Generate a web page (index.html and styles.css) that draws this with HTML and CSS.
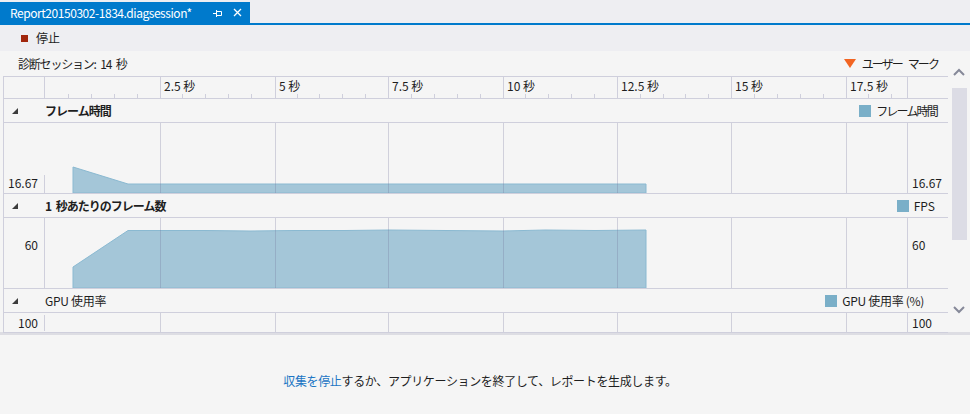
FILE: index.html
```html
<!DOCTYPE html>
<html>
<head>
    <link rel="stylesheet" href="styles.css">
</head>
<body>
    <div class="tabbar">
        <div class="tab">
            <span class="tab-title">Report20150302-1834.diagsession*</span>
            <svg class="pin" width="10" height="9" viewBox="0 0 10 9"><path d="M0 4.5H3M3.5 1V8M3.5 2.5H8.5V6.5H3.5" fill="none" stroke="#fff"/></svg>
            <svg class="close" width="9" height="9" viewBox="0 0 9 9"><path d="M1 1L8 8M8 1L1 8" stroke="#fff" stroke-width="1.3"/></svg>
        </div>
    </div>

    <div class="toolbar">
        <span class="stop-icon"></span>
        <span>停止</span>
    </div>

    <div class="main">
        <div class="view">
            <div class="session">
                <span class="session-info">診断セッション: 14 秒</span>
                <span class="user-mark"><span class="mark-icon"></span>ユーザー マーク</span>
            </div>

            <div class="tracks">
                <div class="row ruler">
                    <div class="cell side"></div>
                    <div class="cell plot">
                        <svg width="862" height="21">
                            <path class="major" d="M115.5 0V21M230.5 0V21M343.5 0V21M458.5 0V21M572.5 0V21M686.5 0V21M801.5 0V21"/>
                            <path class="minor" d="M23.5 17V21M46.5 17V21M69.5 17V21M92.5 17V21M137.5 17V21M160.5 17V21M183.5 17V21M206.5 17V21M252.5 17V21M274.5 17V21M297.5 17V21M320.5 17V21M366.5 17V21M389.5 17V21M412.5 17V21M435.5 17V21M480.5 17V21M503.5 17V21M526.5 17V21M549.5 17V21M595.5 17V21M618.5 17V21M640.5 17V21M663.5 17V21M709.5 17V21M732.5 17V21M755.5 17V21M778.5 17V21M823.5 17V21M846.5 17V21"/>
                            <text x="119" y="14">2.5 秒</text>
                            <text x="234" y="14">5 秒</text>
                            <text x="347" y="14">7.5 秒</text>
                            <text x="462" y="14">10 秒</text>
                            <text x="576" y="14">12.5 秒</text>
                            <text x="690" y="14">15 秒</text>
                            <text x="805" y="14">17.5 秒</text>
                        </svg>
                    </div>
                    <div class="cell"></div>
                </div>

                <div class="track-head">
                    <span class="toggle"><span class="expander"></span></span>
                    <span class="track-title">フレーム時間</span>
                    <span class="legend"><span class="swatch"></span>フレーム時間</span>
                </div>
                <div class="row chart">
                    <div class="cell side label-bottom">16.67</div>
                    <div class="cell plot">
                        <svg width="862" height="70">
                            <path class="area" d="M28 70V44L83 61H601V70Z"/>
                            <path class="grid" d="M115.5 0V70M230.5 0V70M343.5 0V70M458.5 0V70M572.5 0V70M686.5 0V70M801.5 0V70"/>
                        </svg>
                    </div>
                    <div class="cell right label-bottom">16.67</div>
                </div>

                <div class="track-head">
                    <span class="toggle"><span class="expander"></span></span>
                    <span class="track-title">1 秒あたりのフレーム数</span>
                    <span class="legend latin"><span class="swatch"></span>FPS</span>
                </div>
                <div class="row chart">
                    <div class="cell side label-top">60</div>
                    <div class="cell plot">
                        <svg width="862" height="70">
                            <path class="area" d="M28 70V49L83 12.5L160 12.5L205 13L250 12.5L300 12.5L344 12L400 12.5L458 13L500 12L550 12.5L601 12V70Z"/>
                            <path class="grid" d="M115.5 0V70M230.5 0V70M343.5 0V70M458.5 0V70M572.5 0V70M686.5 0V70M801.5 0V70"/>
                        </svg>
                    </div>
                    <div class="cell right label-top">60</div>
                </div>

                <div class="track-head">
                    <span class="toggle"><span class="expander"></span></span>
                    <span class="track-title plain">GPU 使用率</span>
                    <span class="legend gpu"><span class="swatch"></span>GPU 使用率 (%)</span>
                </div>
                <div class="row chart short">
                    <div class="cell side label-mid">100</div>
                    <div class="cell plot">
                        <svg width="862" height="19">
                            <path class="grid" d="M115.5 0V19M230.5 0V19M343.5 0V19M458.5 0V19M572.5 0V19M686.5 0V19M801.5 0V19"/>
                        </svg>
                    </div>
                    <div class="cell right label-mid">100</div>
                </div>
            </div>
        </div>

        <div class="scrollbar">
            <svg class="sb-btn" width="12" height="16" viewBox="0 0 12 16"><path d="M1 11L6 6L11 11" fill="none" stroke="#868999" stroke-width="2"/></svg>
            <div class="thumb"></div>
            <svg class="sb-btn down" width="12" height="16" viewBox="0 0 12 16"><path d="M1 5L6 10L11 5" fill="none" stroke="#868999" stroke-width="2"/></svg>
        </div>
    </div>

    <div class="splitter"></div>

    <div class="bottom">
        <p><a href="#" class="link">収集を停止</a>するか、アプリケーションを終了して、レポートを生成します。</p>
    </div>
</body>
</html>
```

FILE: styles.css
```css
body {
    margin: 0;
    font-family: "Noto Sans CJK JP", "Noto Sans", sans-serif;
    font-size: 12px;
    line-height: 16px;
    color: #1e1e1e;
    background-color: #f5f5f5;
    width: 970px;
    height: 414px;
    overflow: hidden;
}
.tabbar {
    background-color: #eeeef2;
    padding-top: 2px;
    border-bottom: 2px solid #007acc;
    height: 21px;
}
.tab {
    width: 250px;
    height: 21px;
    box-sizing: border-box;
    background-color: #007acc;
    color: white;
    display: flex;
    align-items: center;
    padding-left: 10px;
}
.tab-title {
    width: 203px;
    letter-spacing: -0.45px;
}
.pin {
    margin-right: 10px;
    margin-top: 2px;
}
.toolbar {
    height: 26px;
    background-color: #eeeef2;
    display: flex;
    align-items: center;
    gap: 8px;
    padding-left: 21px;
}
.stop-icon {
    width: 7px;
    height: 7px;
    background-color: #a1260d;
}
.main {
    display: flex;
    height: 281px;
}
.view {
    width: 948px;
}
.session {
    height: 25px;
    display: flex;
    align-items: center;
    justify-content: space-between;
    padding: 0 10px 0 18px;
}
.session-info {
    letter-spacing: -1.2px;
    word-spacing: 3px;
}
.user-mark {
    display: flex;
    align-items: center;
    letter-spacing: -1.9px;
    word-spacing: 5px;
}
.mark-icon {
    width: 0;
    height: 0;
    border-left: 6px solid transparent;
    border-right: 6px solid transparent;
    border-top: 9px solid #f26522;
    margin-right: 6px;
}
.tracks {
    margin-left: 3px;
    border-left: 1px solid #cfcfdc;
    border-top: 1px solid #cfcfdc;
}
.row {
    display: grid;
    grid-template-columns: 41px 863px 40px;
    border-bottom: 1px solid #cfcfdc;
}
.cell {
    box-sizing: border-box;
}
.side, .plot {
    border-right: 1px solid #cfcfdc;
}
.plot svg {
    display: block;
}
.ruler {
    height: 21px;
}
.ruler .major, .ruler .minor, .grid {
    stroke: #cfcfdc;
    fill: none;
}
.ruler text {
    font-size: 12px;
    fill: #1e1e1e;
}
.area {
    fill: #a4c6d8;
    stroke: #8ab9d1;
    stroke-width: 1;
}
.chart .grid {
    stroke: rgba(110, 110, 150, 0.28);
}
.chart {
    height: 70px;
}
.chart.short {
    height: 19px;
}
.side {
    text-align: right;
    padding-right: 6px;
}
.right {
    padding-left: 4px;
}
.label-bottom {
    align-self: end;
    padding-bottom: 2px;
}
.label-top {
    padding-top: 19px;
}
.label-mid {
    align-self: center;
}
.track-head {
    height: 23px;
    display: flex;
    align-items: center;
    border-bottom: 1px solid #cfcfdc;
}
.toggle {
    width: 41px;
    display: flex;
    padding-left: 8px;
    box-sizing: border-box;
}
.expander {
    width: 0;
    height: 0;
    border-left: 6px solid transparent;
    border-bottom: 6px solid #3c3c3c;
}
.track-title {
    flex: 1;
    font-weight: bold;
    letter-spacing: -1px;
    word-spacing: 3px;
}
.track-title.plain {
    font-weight: normal;
    letter-spacing: -0.3px;
    word-spacing: 0;
}
.legend {
    display: flex;
    align-items: center;
    padding-right: 11px;
    letter-spacing: -1.8px;
}
.legend.latin {
    letter-spacing: 0;
    padding-right: 13px;
}
.legend.gpu {
    padding-right: 24px;
    letter-spacing: -0.3px;
}
.swatch {
    width: 12px;
    height: 12px;
    background-color: #7aafc8;
    margin-right: 5px;
}
.scrollbar {
    width: 22px;
    display: flex;
    flex-direction: column;
    align-items: center;
    padding-top: 13px;
    padding-bottom: 14px;
    box-sizing: border-box;
}
.thumb {
    width: 15px;
    height: 152px;
    margin-top: 8px;
    background-color: #dcdce5;
}
.down {
    margin-top: auto;
}
.splitter {
    height: 3px;
    background-color: #dddde3;
}
.bottom {
    height: 79px;
    text-align: center;
    padding-right: 10px;
}
.bottom p {
    margin: 0;
    padding-top: 38px;
    letter-spacing: -0.35px;
}
.link {
    color: #1c76c4;
    text-decoration: none;
}
```
